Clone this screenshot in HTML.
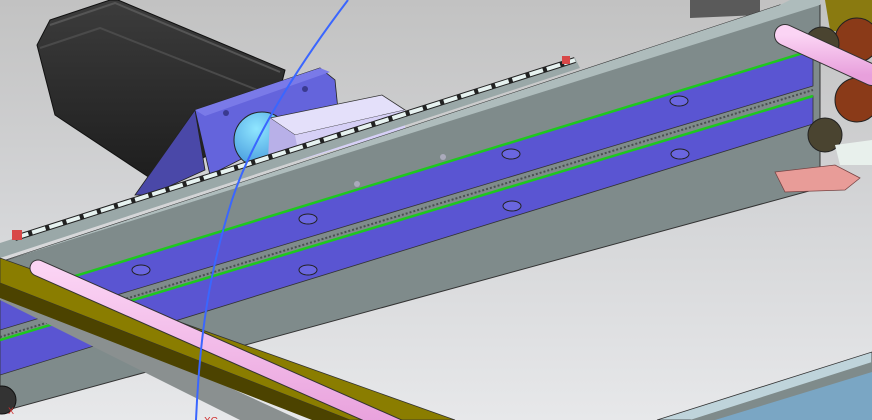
<!DOCTYPE html>
<html><head><meta charset="utf-8"><style>
html,body{margin:0;padding:0;width:872px;height:420px;overflow:hidden;}
svg{display:block}
</style></head><body>
<svg width="872" height="420" viewBox="0 0 872 420" xmlns="http://www.w3.org/2000/svg">
<defs>
<linearGradient id="bg" x1="0" y1="0" x2="0" y2="1">
<stop offset="0" stop-color="#c2c2c2"/><stop offset="0.5" stop-color="#d4d5d7"/><stop offset="1" stop-color="#e7e8ea"/>
</linearGradient>
<linearGradient id="motor" x1="0" y1="0" x2="0" y2="1">
<stop offset="0" stop-color="#3c3c3c"/><stop offset="1" stop-color="#1e1e1e"/>
</linearGradient>
<radialGradient id="cy" cx="0.4" cy="0.3" r="0.8">
<stop offset="0" stop-color="#8fe6ff"/><stop offset="1" stop-color="#3c8fd8"/>
</radialGradient>
<linearGradient id="pink" x1="0" y1="0" x2="0" y2="1">
<stop offset="0" stop-color="#fbd4f4"/><stop offset="1" stop-color="#e8a0dc"/>
</linearGradient>
</defs>
<rect width="872" height="420" fill="url(#bg)"/>
<polygon points="690,0 760,0 760,15 690,18" fill="#5a5a5a"/>
<polygon points="825,0 872,0 872,40 830,30" fill="#8a7a10"/>
<!-- motor -->
<polygon points="50,20 110,0 118,0 285,70 275,110 200,160 150,178 55,115 37,45" fill="url(#motor)" stroke="#111" stroke-width="1"/>
<polyline points="50,25 115,3 280,72" fill="none" stroke="#555" stroke-width="2"/>
<polyline points="40,48 100,28 270,95" fill="none" stroke="#4a4a4a" stroke-width="2"/>
<!-- bracket -->
<polygon points="135,195 195,110 205,170 150,195" fill="#4a48a8" stroke="#222" stroke-width="0.8"/>
<polygon points="195,110 320,68 335,80 338,110 210,175" fill="#6464dc" stroke="#222" stroke-width="0.8"/>
<polygon points="195,110 320,68 330,72 205,116" fill="#7a7ae8"/>
<circle cx="226" cy="113" r="3" fill="#3a3a90"/><circle cx="305" cy="89" r="3" fill="#3a3a90"/>
<circle cx="262" cy="140" r="28" fill="url(#cy)" stroke="#222"/>
<polygon points="270,118 382,95 405,110 295,135" fill="#e4e0fa" stroke="#333" stroke-width="0.8"/>
<polygon points="270,118 295,135 300,160 268,160" fill="#b8b0e8"/>
<polygon points="295,135 405,110 405,130 300,160" fill="#d6d0f6"/>
<!-- beam -->
<polygon points="0,262 780,5 820,5 820,188 0,412" fill="#7f8b8b" stroke="#333" stroke-width="1"/>
<polygon points="0,243 575,58 580,68 0,258" fill="#9aa8a8"/>
<polyline points="15,238 575,60" fill="none" stroke="#222" stroke-width="6"/>
<polyline points="15,238 575,60" fill="none" stroke="#e6f2f0" stroke-width="4" stroke-dasharray="14 4"/>
<polygon points="0,262 780,5 790,0 820,0 820,5" fill="#aebcbc"/>
<!-- upper purple belt -->
<polygon points="0,299 813,50 813,86 0,330" fill="#5a55d2" stroke="#333" stroke-width="0.8"/>
<line x1="0" y1="299" x2="813" y2="50" stroke="#1ec81e" stroke-width="2.5"/>
<line x1="0" y1="337" x2="813" y2="90" stroke="#4a5050" stroke-width="2" stroke-dasharray="2 2"/>
<!-- lower purple belt -->
<polygon points="0,340 813,96 813,124 0,375" fill="#5a55d2" stroke="#333" stroke-width="0.8"/>
<line x1="0" y1="340" x2="813" y2="96" stroke="#1ec81e" stroke-width="2.5"/>
<g fill="#6a66e0" stroke="#222" stroke-width="1">
<ellipse cx="141" cy="270" rx="9" ry="5"/><ellipse cx="308" cy="219" rx="9" ry="5"/>
<ellipse cx="511" cy="154" rx="9" ry="5"/><ellipse cx="679" cy="101" rx="9" ry="5"/>
<ellipse cx="308" cy="270" rx="9" ry="5"/><ellipse cx="512" cy="206" rx="9" ry="5"/>
<ellipse cx="680" cy="154" rx="9" ry="5"/>
</g>
<circle cx="357" cy="184" r="3" fill="#aab"/><circle cx="443" cy="157" r="3" fill="#aab"/>
<!-- right end parts -->
<circle cx="857" cy="40" r="22" fill="#8a3a18" stroke="#222"/>
<circle cx="857" cy="100" r="22" fill="#8a3a18" stroke="#222"/>
<circle cx="822" cy="44" r="17" fill="#4a4430" stroke="#222"/>
<circle cx="825" cy="135" r="17" fill="#4a4430" stroke="#222"/>
<polygon points="775,172 835,165 860,178 845,190 785,192" fill="#e89c98" stroke="#744" stroke-width="0.8"/>
<polygon points="835,145 872,140 872,165 840,165" fill="#e8f0ec"/>
<line x1="785" y1="35" x2="872" y2="75" stroke="#333" stroke-width="22" stroke-linecap="round"/>
<line x1="785" y1="35" x2="872" y2="75" stroke="url(#pink)" stroke-width="20" stroke-linecap="round"/>
<rect x="12" y="230" width="10" height="10" fill="#d84848"/>
<rect x="562" y="56" width="8" height="8" fill="#d84848"/>
<!-- bottom right plate -->
<polygon points="657,420 872,352 872,420" fill="#bfd4db" stroke="#333" stroke-width="0.8"/>
<polygon points="690,420 872,362 872,420" fill="#7f8b8b"/>
<polygon points="715,420 872,372 872,420" fill="#7aa6c4"/>
<!-- olive bar -->
<polygon points="0,300 240,420 300,420 0,282" fill="#8a9090"/>
<polygon points="0,258 455,420 350,420 0,283" fill="#8a7d00" stroke="#333" stroke-width="0.8"/>
<polygon points="0,283 350,420 312,420 0,298" fill="#4c4300"/>
<line x1="38" y1="268" x2="400" y2="428" stroke="#333" stroke-width="17" stroke-linecap="round"/>
<line x1="38" y1="268" x2="400" y2="428" stroke="url(#pink)" stroke-width="15" stroke-linecap="round"/>
<circle cx="2" cy="400" r="14" fill="#333" stroke="#111"/>
<path d="M348,0 C310,50 255,130 232,200 C210,270 200,330 196,420" fill="none" stroke="#3a66ff" stroke-width="2"/>
<text x="204" y="424" font-family="Liberation Sans, sans-serif" font-size="10" fill="#d03030">XC</text>
<text x="8" y="414" font-family="Liberation Sans, sans-serif" font-size="9" fill="#d03030">X</text>
</svg>
</body></html>
